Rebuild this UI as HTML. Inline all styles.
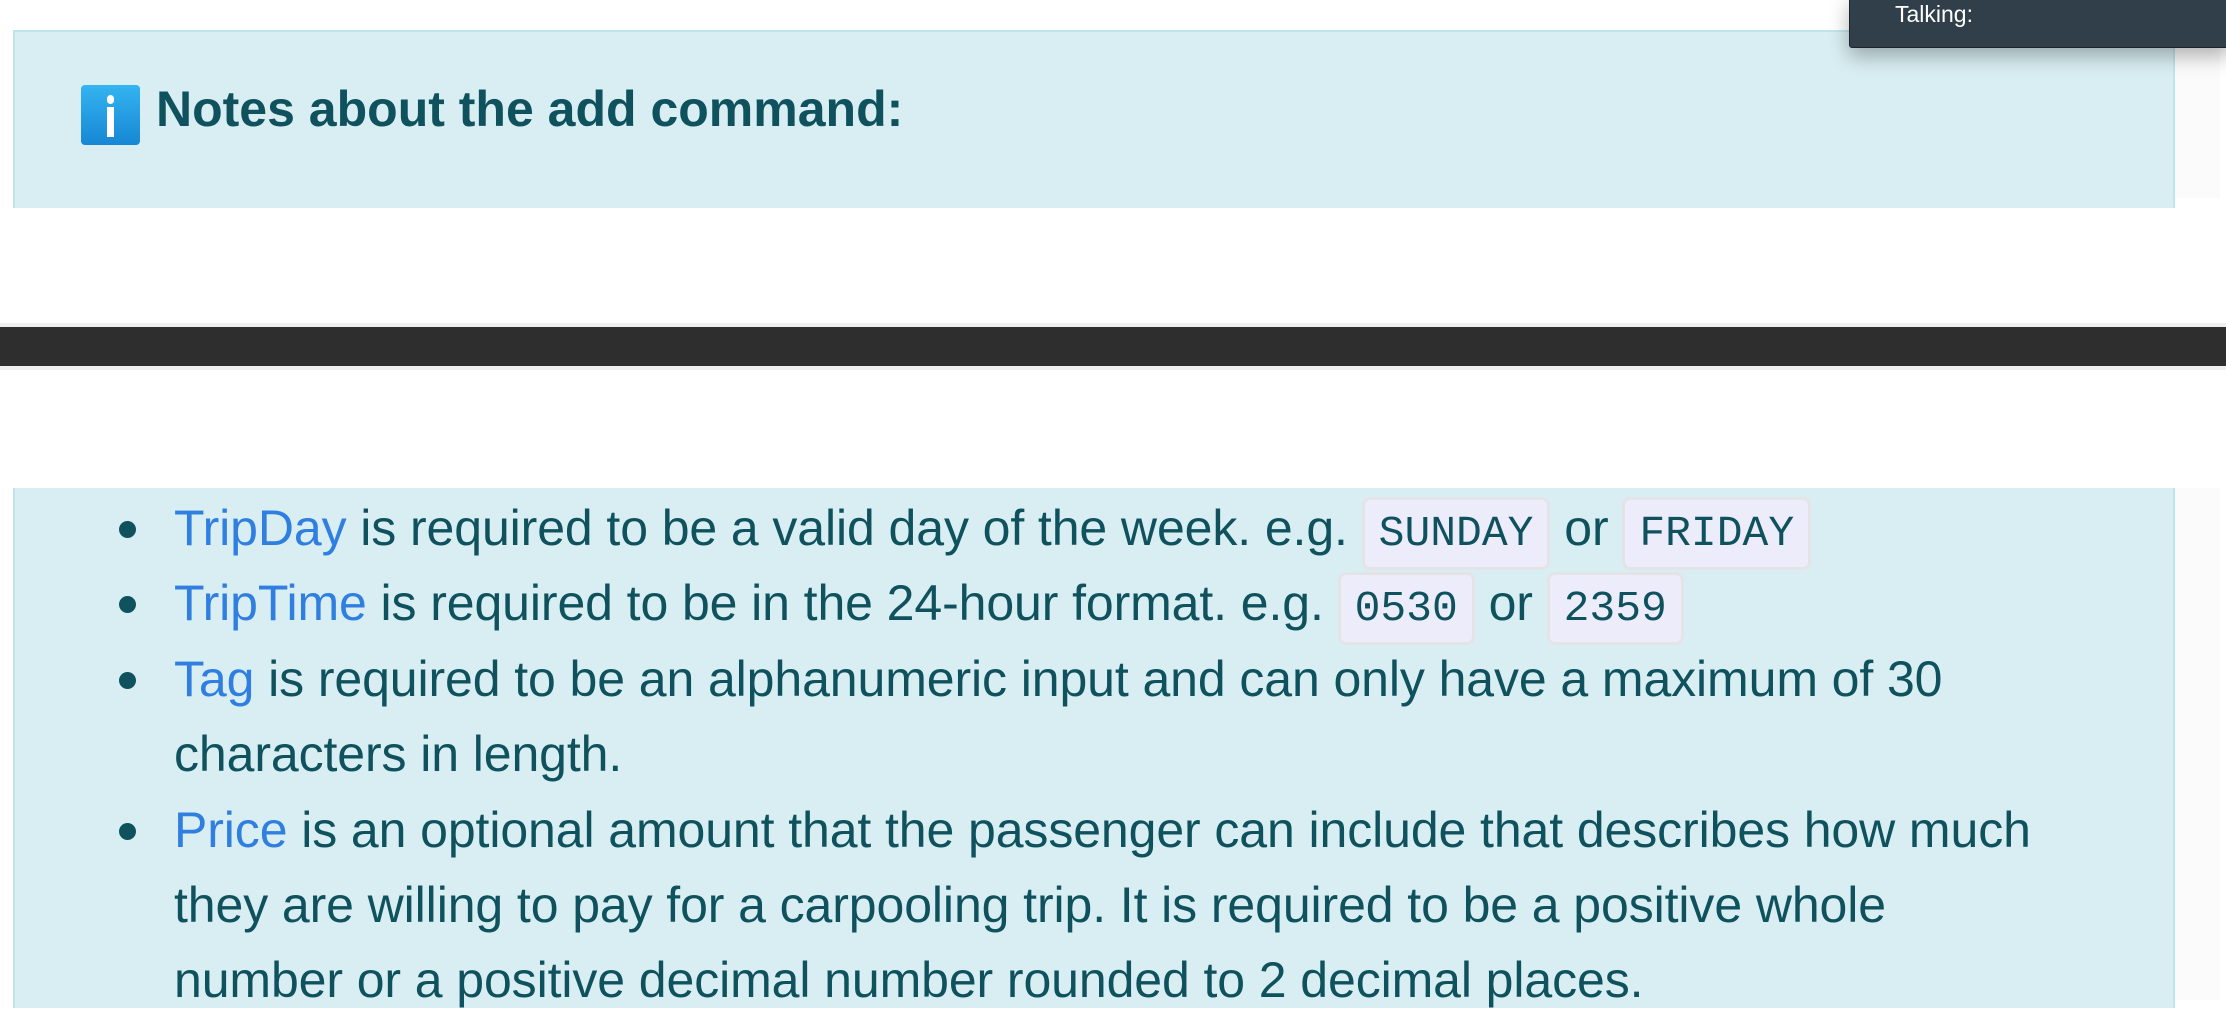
<!DOCTYPE html>
<html><head><meta charset="utf-8"><style>
body{margin:0;width:2226px;height:1000px;position:relative;overflow:hidden;background:#fff;font-family:"Liberation Sans",sans-serif;color:#0f525e}
.box{position:absolute;left:13px;width:2158px;background:#d8eef2;border:2px solid #bee5eb}
.strip{position:absolute;left:2175px;width:45px;background:#fbfbfb}
.title{position:absolute;left:156px;top:77px;font-weight:bold;font-size:50px;line-height:64px;white-space:nowrap}
.icon{position:absolute;left:81px;top:85px;width:59px;height:60px;border-radius:4px;background:linear-gradient(#34b4f0,#1787d4)}
.icon i{position:absolute;left:26px;top:10px;width:7px;height:9px;border-radius:4px;background:#fff}
.icon b{position:absolute;left:26px;top:22px;width:7px;height:30px;background:#fff}
.ln{position:absolute;left:174px;font-size:50px;white-space:nowrap;line-height:60px;letter-spacing:-0.1px}
.a{color:#2f7ee0}
.dot{position:absolute;left:119px;width:17px;height:17px;border-radius:50%;background:#0f525e}
code{font-family:"Liberation Mono",monospace;font-size:43px;background:#ececfb;border:3px solid #e3e3e8;border-radius:8px;padding:9px 14px;letter-spacing:0}
</style></head><body>
<div class="box" style="top:30px;height:176px;border-bottom:none;border-right-width:2px"></div>
<div class="strip" style="top:30px;height:168px"></div>
<div class="icon"><i></i><b></b></div>
<div class="title">Notes about the add command:</div>

<div style="position:absolute;left:0;top:323px;width:2226px;height:47px;background:#efefef"></div>
<div style="position:absolute;left:0;top:327px;width:2226px;height:39px;background:#2e2e2e"></div>

<div class="box" style="top:488px;height:520px;border-top:none;border-bottom:none"></div>
<div class="strip" style="top:488px;height:512px"></div>

<div class="dot" style="top:521px"></div>
<div class="ln" style="top:498px"><span class="a">TripDay</span> is required to be a valid day of the week. e.g. <code>SUNDAY</code> or <code>FRIDAY</code></div>
<div class="dot" style="top:596px"></div>
<div class="ln" style="top:573px"><span class="a">TripTime</span> is required to be in the 24-hour format. e.g. <code>0530</code> or <code>2359</code></div>
<div class="dot" style="top:672px"></div>
<div class="ln" style="top:649px"><span class="a">Tag</span> is required to be an alphanumeric input and can only have a maximum of 30</div>
<div class="ln" style="top:724px">characters in length.</div>
<div class="dot" style="top:823px"></div>
<div class="ln" style="top:800px"><span class="a">Price</span> is an optional amount that the passenger can include that describes how much</div>
<div class="ln" style="top:875px">they are willing to pay for a carpooling trip. It is required to be a positive whole</div>
<div class="ln" style="top:950px">number or a positive decimal number rounded to 2 decimal places.</div>

<div style="position:absolute;left:1849px;top:-4px;width:380px;height:50px;background:#303f4a;border:1px solid #1c252b;border-radius:3px;box-shadow:0 8px 20px rgba(0,0,0,.3)"></div>
<div style="position:absolute;left:1895px;top:0px;font-size:23px;color:#fff;line-height:28px">Talking:</div>
</body></html>
